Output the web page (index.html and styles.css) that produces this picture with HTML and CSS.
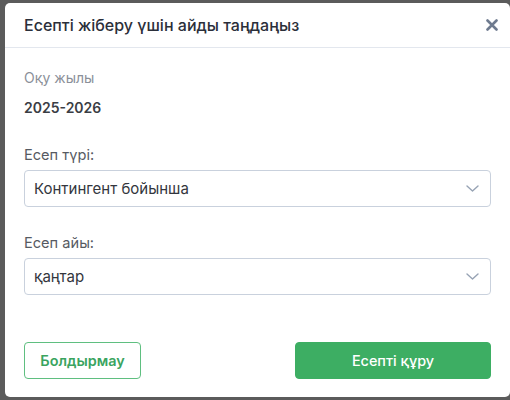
FILE: index.html
```html
<!DOCTYPE html>
<html lang="kk">
<head>
<meta charset="utf-8">
<title>Есепті жіберу</title>
<link rel="stylesheet" href="styles.css">
</head>
<body>
<div class="dialog">
  <div class="dialog-header">
    <h2 class="dialog-title">Есепті жіберу үшін айды таңдаңыз</h2>
    <button class="close" aria-label="Жабу">
      <svg width="12" height="12" viewBox="0 0 12 12"><path d="M1.5 1.5 L10.5 10.5 M10.5 1.5 L1.5 10.5" stroke="#6f7b8f" stroke-width="2.6" stroke-linecap="round"/></svg>
    </button>
  </div>
  <div class="dialog-body">
    <div class="info-label">Оқу жылы</div>
    <div class="info-value">2025-2026</div>

    <div class="field">
      <label class="field-label">Есеп түрі:</label>
      <div class="select">
        <span>Контингент бойынша</span>
        <svg class="chev" width="13" height="7" viewBox="0 0 13 7"><path d="M1 1 L6.5 6 L12 1" fill="none" stroke="#97a3b4" stroke-width="1.4" stroke-linecap="round" stroke-linejoin="round"/></svg>
      </div>
    </div>

    <div class="field">
      <label class="field-label">Есеп айы:</label>
      <div class="select">
        <span>қаңтар</span>
        <svg class="chev" width="13" height="7" viewBox="0 0 13 7"><path d="M1 1 L6.5 6 L12 1" fill="none" stroke="#97a3b4" stroke-width="1.4" stroke-linecap="round" stroke-linejoin="round"/></svg>
      </div>
    </div>
  </div>
  <div class="dialog-footer">
    <button class="btn btn-outline">Болдырмау</button>
    <button class="btn btn-primary">Есепті құру</button>
  </div>
</div>
</body>
</html>
```

FILE: styles.css
```css
html, body {
  margin: 0;
  padding: 0;
  height: 100%;
  overflow: hidden;
}
body {
  background: #5b5b5b;
  font-family: Inter, "Noto Sans", "DejaVu Sans", sans-serif;
  padding: 3px 0 0 5px;
  box-sizing: border-box;
}
.dialog {
  width: 505px;
  height: 394px;
  background: #ffffff;
  border-radius: 5px;
  display: flex;
  flex-direction: column;
  box-sizing: border-box;
}
.dialog-header {
  height: 45px;
  box-sizing: border-box;
  border-bottom: 1px solid #e3e7ee;
  display: flex;
  align-items: center;
  justify-content: space-between;
  padding: 0 12px 0 19px;
}
.dialog-title {
  margin: 0;
  font-size: 16px;
  font-weight: 500;
  color: #2b2f3a;
  line-height: 20px;
}
.close {
  border: 0;
  background: none;
  padding: 0;
  width: 12px;
  height: 12px;
  display: flex;
  cursor: pointer;
}
.dialog-body {
  padding: 20px 19px 0 19px;
  flex: 1;
}
.info-label {
  font-size: 14px;
  line-height: 20px;
  color: #8b9099;
}
.info-value {
  margin-top: 10px;
  font-size: 14px;
  line-height: 20px;
  font-weight: 600;
  color: #3a3d44;
}
.field {
  margin-top: 27px;
  display: flex;
  flex-direction: column;
  gap: 5px;
}
.field + .field {
  margin-top: 26px;
}
.field-label {
  font-size: 14.6px;
  line-height: 20px;
  color: #565a62;
}
.select {
  height: 37px;
  box-sizing: border-box;
  border: 1px solid #c9d1dd;
  border-radius: 4px;
  display: flex;
  align-items: center;
  justify-content: space-between;
  padding: 0 11px 0 9px;
  font-size: 15px;
  color: #33363d;
}
.dialog-footer {
  display: flex;
  justify-content: space-between;
  padding: 0 19px 18px 19px;
}
.btn {
  height: 37px;
  border-radius: 4px;
  font-family: inherit;
  font-size: 14.4px;
  cursor: pointer;
  box-sizing: border-box;
}
.btn-outline {
  width: 117px;
  background: #fff;
  border: 1px solid #5fbf80;
  color: #3aa45f;
  font-weight: 600;
}
.btn-primary {
  width: 196px;
  background: #3dae63;
  border: 1px solid #3dae63;
  color: #fff;
  font-weight: 500;
}
```
